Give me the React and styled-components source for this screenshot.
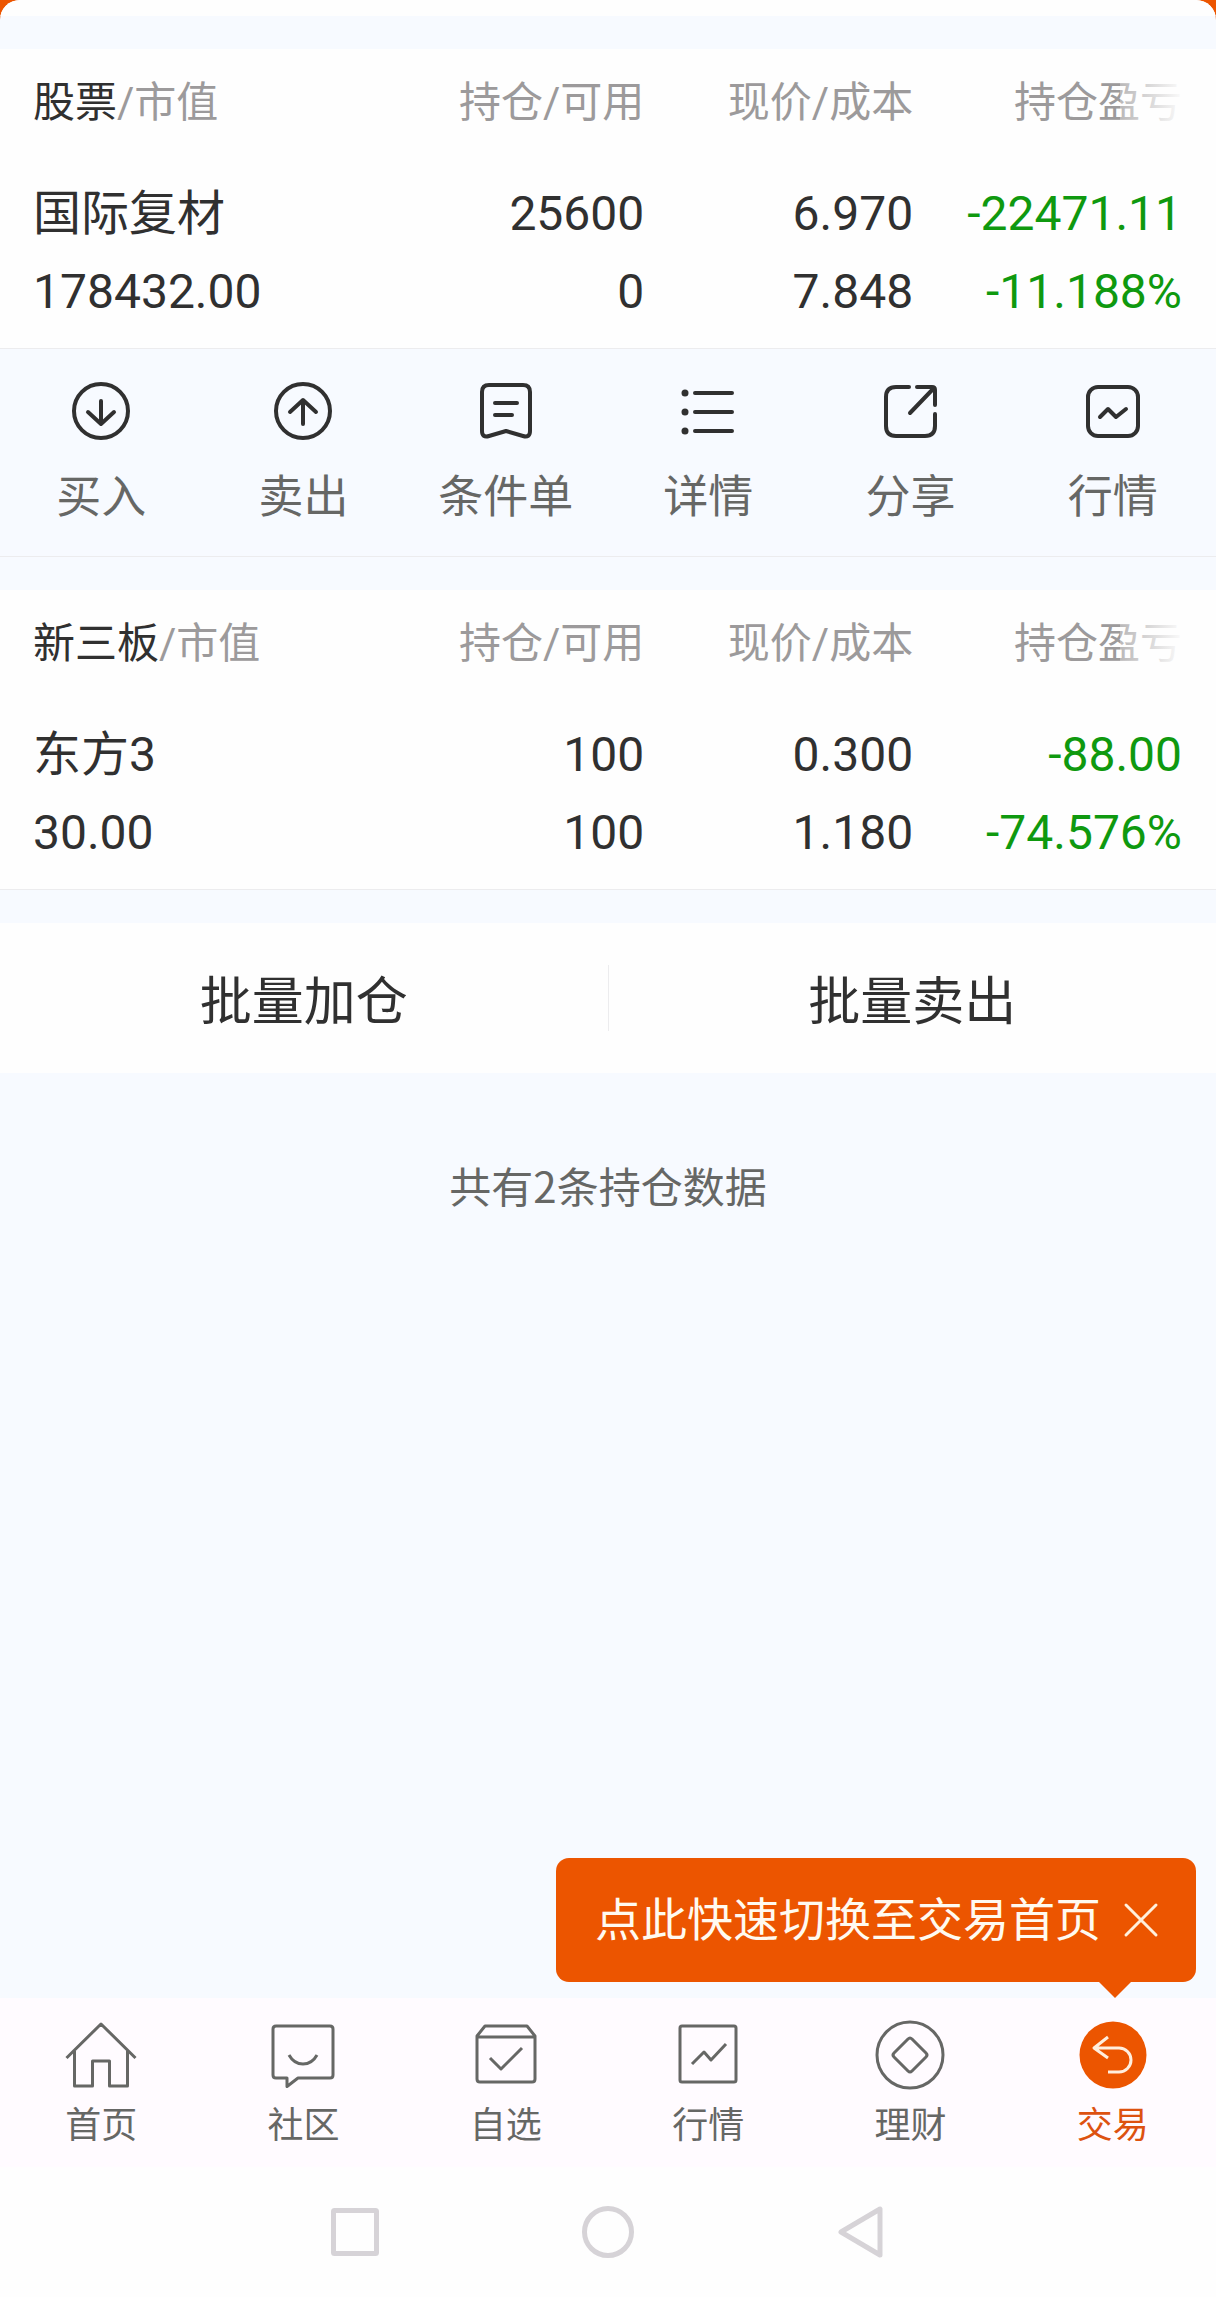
import React, { useState } from "react";
import styled, { createGlobalStyle } from "styled-components";

const GlobalStyle = createGlobalStyle`
    :root {
        --bg: #f7faff;
        --card: #fefefe;
        --line: #ececee;
        --ink: #303030;
        --grey: #666765;
        --grey-light: #9c9a9b;
        --green: #0f990f;
        --orange: #ec5500;
        --font-label: "Noto Sans CJK SC", sans-serif;
    }

    * {
        box-sizing: border-box;
    }

    body {
        margin: 0;
        background-color: var(--orange);
        color: var(--ink);
        font-family: Roboto, "Noto Sans CJK SC", sans-serif;
    }

    button {
        border: 0;
        padding: 0;
        background: none;
        color: inherit;
        font: inherit;
        cursor: pointer;
    }
`

const Page = styled.div`
    display: flex;
    flex-direction: column;
    min-height: 100vh;
    background-color: var(--bg);
    border-radius: 20px 20px 0 0;
    overflow: hidden;
`

const SheetTop = styled.div`
    height: 16px;
    background-color: var(--card);
`

const Main = styled.main`
    flex: 1;
    padding-top: 33px;
`

const Card = styled.section`
    position: relative;
    padding: 0 34px 17px 33px;
    background-color: var(--card);
    border-bottom: 1px solid var(--line);
    margin-bottom: ${props => props.$joined ? "0" : "33px"};
`

const Table = styled.table`
    width: 100%;
    table-layout: fixed;
    border-collapse: collapse;
`

const HeadCell = styled.th`
    width: ${props => props.$first ? "auto" : "23.4%"};
    height: 104px;
    padding: 4px 0 0;
    color: var(--grey-light);
    font-size: 42px;
    font-weight: 400;
    line-height: 56px;
    text-align: ${props => props.$first ? "left" : "right"};
    white-space: nowrap;
`

const Market = styled.span`
    color: var(--ink);
`

const Fade = styled.div`
    position: absolute;
    top: 0;
    right: 0;
    width: 96px;
    height: 104px;
    background: linear-gradient(to right, rgba(254, 254, 254, 0.3), rgba(254, 254, 254, 0.95) 60px);
    pointer-events: none;
`

const Cell = styled.td`
    padding: 22px 0 0;
    color: ${props => props.$loss ? "var(--green)" : "var(--ink)"};
    font-size: 48px;
    line-height: 78px;
    text-align: ${props => props.$first ? "left" : "right"};
    white-space: nowrap;
`

const Line = styled.div`
    height: 78px;
`

const Actions = styled.div`
    display: grid;
    grid-template-columns: repeat(6, 1fr);
    height: 208px;
    margin-bottom: 33px;
    padding: 32px 2px 0 0;
    border-bottom: 1px solid var(--line);
`

const Action = styled.button`
    display: flex;
    flex-direction: column;
    align-items: center;
    gap: 23px;
    color: var(--grey);
    font-family: var(--font-label);
    font-size: 45px;
    line-height: 60px;
`

const ActionIcon = styled.svg`
    width: 60px;
    height: 60px;
    fill: none;
    stroke: var(--ink);
    stroke-width: 4;
    stroke-linecap: round;
    stroke-linejoin: round;
`

const Batch = styled.div`
    display: flex;
    align-items: center;
    height: 150px;
    background-color: var(--card);
`

const BatchButton = styled.button`
    flex: 1;
    height: 100%;
    font-family: var(--font-label);
    font-size: 52px;
    line-height: 66px;
`

const Divider = styled.div`
    width: 1px;
    height: 66px;
    background-color: var(--line);
`

const Total = styled.p`
    margin: 84px 0 0;
    color: var(--grey);
    font-family: var(--font-label);
    font-size: 42px;
    line-height: 56px;
    text-align: center;
`

const Footer = styled.footer`
    position: relative;
`

const Tip = styled.div`
    position: absolute;
    right: 20px;
    bottom: calc(100% + 16px);
    display: flex;
    align-items: center;
    gap: 22px;
    height: 124px;
    padding: 0 37px 0 39px;
    border-radius: 13px;
    background-color: var(--orange);
    color: #fffaf0;
    font-size: 46px;
    line-height: 60px;
    white-space: nowrap;

    &::after {
        content: "";
        position: absolute;
        top: 100%;
        right: 65px;
        border: 16px solid transparent;
        border-top-color: var(--orange);
        border-bottom: 0;
    }
`

const Close = styled.button`
    display: flex;

    svg {
        width: 36px;
        height: 36px;
        stroke: #fff0dc;
        stroke-width: 3;
        stroke-linecap: round;
    }
`

const TabBar = styled.nav`
    display: grid;
    grid-template-columns: repeat(6, 1fr);
    height: 169px;
    padding: 21px 2px 0 0;
    background-color: #fffbff;
`

const Tab = styled.a`
    display: flex;
    flex-direction: column;
    align-items: center;
    gap: 11px;
    color: ${props => props.$active ? "#dd5210" : "var(--grey)"};
    font-size: 36px;
    line-height: 48px;
    text-decoration: none;
`

const TabIcon = styled.svg`
    width: 72px;
    height: 72px;
    fill: none;
    stroke: var(--grey);
    stroke-width: 3;
    stroke-linejoin: round;
`

const SystemBar = styled.div`
    display: flex;
    justify-content: center;
    align-items: center;
    gap: 199px;
    height: 130px;
    background-color: var(--card);
`

const SystemButton = styled.button`
    display: flex;

    svg {
        width: 54px;
        height: 54px;
        fill: none;
        stroke: #d6d3d7;
        stroke-width: 5;
        stroke-linejoin: round;
    }
`

const stocks = [
    { name: "国际复材", value: "178432.00", held: "25600", usable: "0", price: "6.970", cost: "7.848", profit: "-22471.11", rate: "-11.188%" },
]

const neeq = [
    { name: "东方3", value: "30.00", held: "100", usable: "100", price: "0.300", cost: "1.180", profit: "-88.00", rate: "-74.576%" },
]

const actions = [
    {
        label: "买入",
        icon: <><circle cx="30" cy="30" r="27" /><path d="M30 20V43M17 31L30 43L43 31" /></>
    },
    {
        label: "卖出",
        icon: <><circle cx="30" cy="30" r="27" /><path d="M30 43V20M17 31L30 19L43 31" /></>
    },
    {
        label: "条件单",
        icon: <><path d="M13 4H47Q54 4 54 11V50Q54 57 47 55L30 50L13 55Q6 57 6 50V11Q6 4 13 4Z" /><path d="M19 22H41M19 34H36" /></>
    },
    {
        label: "详情",
        icon: (
            <>
                <path d="M17 12H54M17 31H54M17 50H54" />
                <g fill="#303030" stroke="none">
                    <circle cx="7" cy="12" r="3.5" />
                    <circle cx="7" cy="31" r="3.5" />
                    <circle cx="7" cy="50" r="3.5" />
                </g>
            </>
        )
    },
    {
        label: "分享",
        icon: <path d="M29 6H16Q6 6 6 16V45Q6 55 16 55H45Q55 55 55 45V33M37 6H52Q55 6 55 9V24M54 7L30 32" />
    },
    {
        label: "行情",
        icon: <><rect x="5" y="6" width="50" height="49" rx="10" /><path d="M17 36L25 28L33 36L43 28" /></>
    },
]

const tabs = [
    {
        label: "首页",
        icon: <path d="M1.5 39L36 5L70.5 39M9.5 32V67H27.5V42H44.5V67H62.5V32" />
    },
    {
        label: "社区",
        icon: <><path d="M9 7H63Q66 7 66 10V56Q66 59 63 59H31L20 67.500V59H9Q6 59 6 56V10Q6 7 9 7Z" /><path d="M22 36Q27 45 36 45T50 36" /></>
    },
    {
        label: "自选",
        icon: <><path d="M7 17L15 7H57L65 17V60Q65 63 62 63H10Q7 63 7 60ZM7 18H65" /><path d="M20 39L31 50L52 29" /></>
    },
    {
        label: "行情",
        icon: <><rect x="8" y="7" width="56" height="56" rx="2" /><path d="M20 45L32 33L39 41L54 25" /></>
    },
    {
        label: "理财",
        icon: <><circle cx="36" cy="36" r="33" /><path d="M34 20Q36 18 38 20L52 34Q54 36 52 38L38 52Q36 54 34 52L20 38Q18 36 20 34Z" /></>
    },
    {
        label: "交易",
        active: true,
        icon: (
            <>
                <circle cx="36" cy="36" r="33.500" fill="#ec5500" stroke="none" />
                <path d="M31 18L17 29L31 39M17 29H42A12 12 0 0 1 42 53H31" stroke="#ffeedd" />
            </>
        )
    },
]

function Holdings({market, rows, joined}) {
    return (
        <Card $joined={joined}>
            <Table>
                <thead>
                    <tr>
                        <HeadCell $first scope="col"><Market>{market}</Market>/市值</HeadCell>
                        <HeadCell scope="col">持仓/可用</HeadCell>
                        <HeadCell scope="col">现价/成本</HeadCell>
                        <HeadCell scope="col">持仓盈亏</HeadCell>
                    </tr>
                </thead>
                <tbody>
                    {rows.map(row => (
                        <tr key={row.name}>
                            <Cell $first><Line>{row.name}</Line><Line>{row.value}</Line></Cell>
                            <Cell><Line>{row.held}</Line><Line>{row.usable}</Line></Cell>
                            <Cell><Line>{row.price}</Line><Line>{row.cost}</Line></Cell>
                            <Cell $loss><Line>{row.profit}</Line><Line>{row.rate}</Line></Cell>
                        </tr>
                    ))}
                </tbody>
            </Table>
            <Fade />
        </Card>
    )
}

function App() {
    const [tipOpen, setTipOpen] = useState(true);

    return (
        <Page>
            <GlobalStyle />
            <SheetTop />
            <Main>
                <Holdings market="股票" rows={stocks} joined />
                <Actions>
                    {actions.map(({label, icon}) => (
                        <Action key={label} type="button">
                            <ActionIcon viewBox="0 0 60 60" aria-hidden="true">{icon}</ActionIcon>
                            {label}
                        </Action>
                    ))}
                </Actions>
                <Holdings market="新三板" rows={neeq} />
                <Batch>
                    <BatchButton type="button">批量加仓</BatchButton>
                    <Divider />
                    <BatchButton type="button">批量卖出</BatchButton>
                </Batch>
                <Total>共有{stocks.length + neeq.length}条持仓数据</Total>
            </Main>
            <Footer>
                {tipOpen && (
                    <Tip>
                        点此快速切换至交易首页
                        <Close type="button" aria-label="关闭" onClick={() => setTipOpen(false)}>
                            <svg viewBox="0 0 36 36"><path d="M3 3L33 33M33 3L3 33" /></svg>
                        </Close>
                    </Tip>
                )}
                <TabBar>
                    {tabs.map(({label, icon, active}) => (
                        <Tab key={label} href="#" $active={active}>
                            <TabIcon viewBox="0 0 72 72" aria-hidden="true">{icon}</TabIcon>
                            {label}
                        </Tab>
                    ))}
                </TabBar>
                <SystemBar>
                    <SystemButton type="button" aria-label="最近任务">
                        <svg viewBox="0 0 54 54"><rect x="5.500" y="5.500" width="43" height="43" rx="1" /></svg>
                    </SystemButton>
                    <SystemButton type="button" aria-label="主屏幕">
                        <svg viewBox="0 0 54 54"><circle cx="27" cy="27" r="23.500" /></svg>
                    </SystemButton>
                    <SystemButton type="button" aria-label="返回">
                        <svg viewBox="0 0 54 54"><path d="M46 4V50L7 27Z" /></svg>
                    </SystemButton>
                </SystemBar>
            </Footer>
        </Page>
    )
}

export default App;
